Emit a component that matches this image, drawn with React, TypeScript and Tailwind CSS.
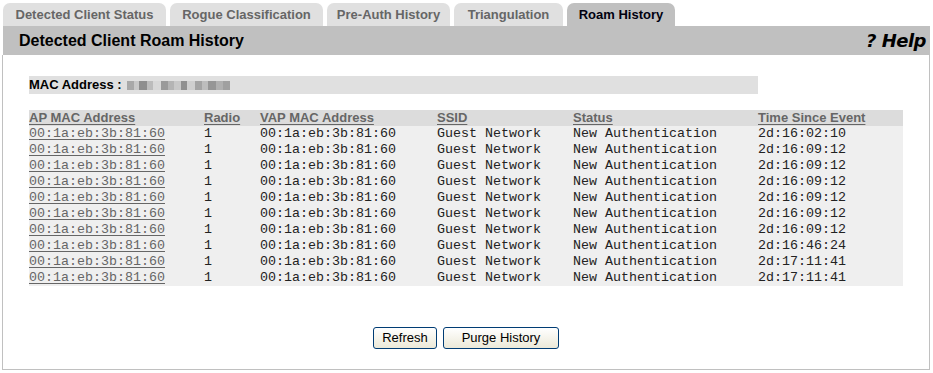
import React from "react";

const rows = [
  "2d:16:02:10",
  "2d:16:09:12",
  "2d:16:09:12",
  "2d:16:09:12",
  "2d:16:09:12",
  "2d:16:09:12",
  "2d:16:09:12",
  "2d:16:46:24",
  "2d:17:11:41",
  "2d:17:11:41",
];

const tabs = [
  { label: "Detected Client Status", w: "w-[163px]" },
  { label: "Rogue Classification", w: "w-[153px]" },
  { label: "Pre-Auth History", w: "w-[123px]" },
  { label: "Triangulation", w: "w-[109px]" },
];

const blur = [
  "bg-[#a8a8a8] w-[7px]",
  "bg-[#c8c8c8] w-[5px]",
  "bg-[#8e8e8e] w-[8px]",
  "bg-[#bcbcbc] w-[6px]",
  "bg-[#d8d8d8] w-[8px]",
  "bg-[#9a9a9a] w-[7px]",
  "bg-[#b4b4b4] w-[6px]",
  "bg-[#c8c8c8] w-[7px]",
  "bg-[#909090] w-[6px]",
  "bg-[#cfcfcf] w-[8px]",
  "bg-[#a4a4a4] w-[7px]",
  "bg-[#bdbdbd] w-[6px]",
  "bg-[#969696] w-[8px]",
  "bg-[#b0b0b0] w-[7px]",
  "bg-[#a0a0a0] w-[7px]",
];

export default function App() {
  return (
    <div className="w-[933px] h-[373px] bg-white font-['Liberation_Sans',Arial,sans-serif] pl-[2px] pt-[3px]">
      <div className="w-[928px]">
        {/* Tabs */}
        <div className="flex gap-[4px] pl-[1px] h-[23px] items-end">
          {tabs.map((t) => (
            <div
              key={t.label}
              className={`${t.w} h-[23px] bg-[#e0e0e0] rounded-t-[7px] flex items-center justify-center text-[13px] font-bold text-[#666666]`}
            >
              {t.label}
            </div>
          ))}
          <div className="w-[108px] h-[23px] bg-[#c0c0c0] rounded-t-[7px] flex items-center justify-center text-[13px] font-bold text-[#000010]">
            Roam History
          </div>
        </div>
        {/* Header bar */}
        <div className="h-[29px] bg-[#c0c0c0] flex items-center justify-between pl-[16px] pr-[4px] ml-[1px]">
          <span className="text-[16px] font-bold text-black">Detected Client Roam History</span>
          <span className="text-[18px] font-bold italic text-black font-['DejaVu_Sans',sans-serif] tracking-[-0.5px]">? Help</span>
        </div>
        {/* Content */}
        <div className="h-[315px] border border-t-0 border-[#c0c0c0] pt-[21px] pl-[26px] flex flex-col">
          <div className="w-[729px] h-[18px] bg-[#e0e0e0] flex items-center text-[13px] font-bold text-black">
            <span>MAC Address :</span>
            <span className="ml-[5px] flex items-center">
              {blur.map((b, i) => (
                <span key={i} className={`${b} h-[9px]`} />
              ))}
            </span>
          </div>
          <table className="mt-[16px] w-[874px] border-collapse table-fixed">
            <colgroup>
              <col className="w-[175px]" />
              <col className="w-[56px]" />
              <col className="w-[177px]" />
              <col className="w-[136px]" />
              <col className="w-[185px]" />
              <col className="w-[145px]" />
            </colgroup>
            <thead>
              <tr className="bg-[#dcdcdc] h-[16px] text-[13px] font-bold text-[#666666] text-left">
                {["AP MAC Address", "Radio", "VAP MAC Address", "SSID", "Status", "Time Since Event"].map((h) => (
                  <th key={h} className="p-0 leading-[16px] font-bold">
                    <span className="underline underline-offset-[2px]">{h}</span>
                  </th>
                ))}
              </tr>
            </thead>
            <tbody className="font-['Liberation_Mono','Courier_New',monospace] text-[13.33px] text-[#222222]">
              {rows.map((t, i) => (
                <tr key={i} className="bg-[#efefef] h-[16px]">
                  <td className="p-0 leading-[16px]">
                    <span className="underline underline-offset-[2px] text-[#666666]">00:1a:eb:3b:81:60</span>
                  </td>
                  <td className="p-0 leading-[16px]">1</td>
                  <td className="p-0 leading-[16px]">00:1a:eb:3b:81:60</td>
                  <td className="p-0 leading-[16px]">Guest Network</td>
                  <td className="p-0 leading-[16px]">New Authentication</td>
                  <td className="p-0 leading-[16px]">{t}</td>
                </tr>
              ))}
            </tbody>
          </table>
          <div className="mt-[41px] flex justify-center gap-[6px] pr-[26px]">
            <button className="w-[64px] h-[22px] rounded-[3px] border border-[#003c74] bg-gradient-to-b from-white to-[#ece9d8] text-[13px] text-black">
              Refresh
            </button>
            <button className="w-[116px] h-[22px] rounded-[3px] border border-[#003c74] bg-gradient-to-b from-white to-[#ece9d8] text-[13px] text-black">
              Purge History
            </button>
          </div>
        </div>
      </div>
    </div>
  );
}
